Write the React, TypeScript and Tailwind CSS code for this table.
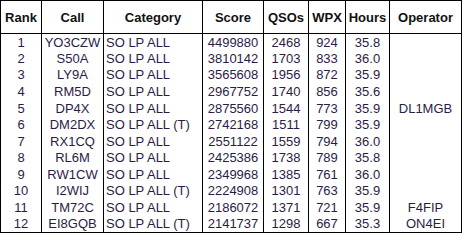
const rows = [
  ['1', 'YO3CZW', 'SO LP ALL', '4499880', '2468', '924', '35.8', ''],
  ['2', 'S50A', 'SO LP ALL', '3810142', '1703', '833', '36.0', ''],
  ['3', 'LY9A', 'SO LP ALL', '3565608', '1956', '872', '35.9', ''],
  ['4', 'RM5D', 'SO LP ALL', '2967752', '1740', '856', '35.6', ''],
  ['5', 'DP4X', 'SO LP ALL', '2875560', '1544', '773', '35.9', 'DL1MGB'],
  ['6', 'DM2DX', 'SO LP ALL (T)', '2742168', '1511', '799', '35.9', ''],
  ['7', 'RX1CQ', 'SO LP ALL', '2551122', '1559', '794', '36.0', ''],
  ['8', 'RL6M', 'SO LP ALL', '2425386', '1738', '789', '35.8', ''],
  ['9', 'RW1CW', 'SO LP ALL', '2349968', '1385', '761', '36.0', ''],
  ['10', 'I2WIJ', 'SO LP ALL (T)', '2224908', '1301', '763', '35.9', ''],
  ['11', 'TM72C', 'SO LP ALL', '2186072', '1371', '721', '35.9', 'F4FIP'],
  ['12', 'EI8GQB', 'SO LP ALL (T)', '2141737', '1298', '667', '35.3', 'ON4EI'],
];

const headers = ['Rank', 'Call', 'Category', 'Score', 'QSOs', 'WPX', 'Hours', 'Operator'];
const widths = ['w-[41px]', 'w-[62px]', 'w-[99px]', 'w-[61px]', 'w-[45px]', 'w-[37px]', 'w-[44px]', 'w-[72px]'];

export default function App() {
  return (
    <div className="w-[466px] h-[247px] bg-white font-['Liberation_Sans',Arial,sans-serif] text-[13px]">
      <table className="table-fixed border-collapse border border-black w-[462px]">
        <colgroup>
          {widths.map((w, i) => (
            <col key={i} className={w} />
          ))}
        </colgroup>
        <thead>
          <tr className="h-[33px]">
            {headers.map((h) => (
              <th key={h} className="border border-black p-0 font-bold text-[#111] text-center align-middle leading-none">
                {h}
              </th>
            ))}
          </tr>
        </thead>
        <tbody>
          {rows.map((r) => (
            <tr key={r[0]} className="h-[16.58px]">
              {r.map((c, i) => (
                <td
                  key={i}
                  className={`border-x border-black p-0 leading-none text-[#2d1b45] whitespace-nowrap ${
                    i === 2 ? 'text-left pl-[2px]' : 'text-center'
                  }`}
                >
                  {c}
                </td>
              ))}
            </tr>
          ))}
        </tbody>
      </table>
    </div>
  );
}
